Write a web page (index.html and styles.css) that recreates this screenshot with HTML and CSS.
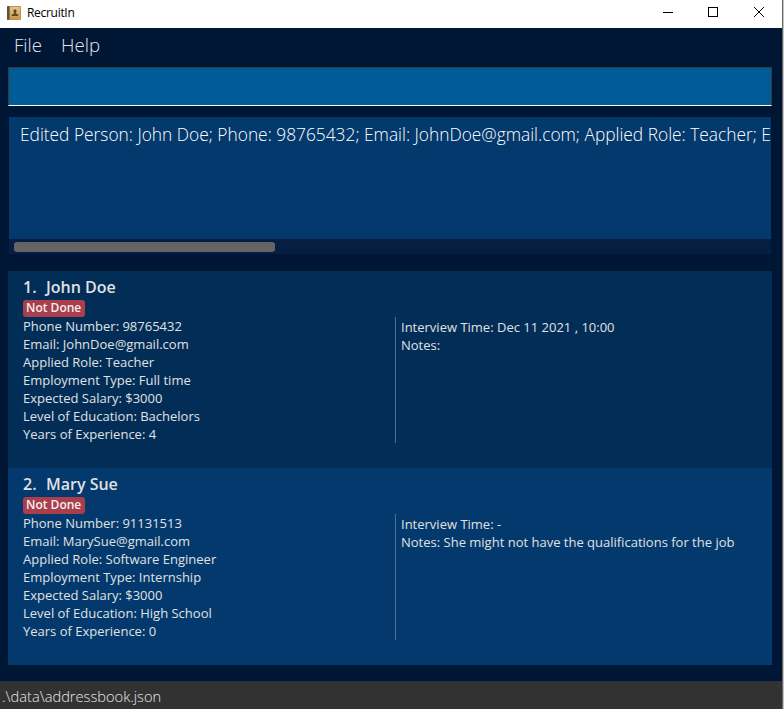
FILE: index.html
```html
<!DOCTYPE html>
<html lang="en">
<head>
<meta charset="utf-8">
<title>RecruitIn</title>
<link rel="stylesheet" href="styles.css">
</head>
<body>
<div class="window">
  <header class="titlebar">
    <svg class="app-icon" width="14" height="14" viewBox="0 0 14 14">
      <defs><linearGradient id="cover" x1="0" y1="0" x2="0" y2="1"><stop offset="0" stop-color="#e3c48c"/><stop offset="1" stop-color="#cc9840"/></linearGradient></defs>
      <rect width="14" height="14" rx="1" fill="#b8925a"/>
      <rect width="2.500" height="14" rx="1" fill="#66503c"/>
      <rect x="3" y="1" width="10" height="12" fill="url(#cover)"/>
      <path d="M8 3.500c1.100 0 1.600.7 1.500 1.700-.1.800-.4 1.200-.7 1.600v.8l2.400.8v1.600H4.800V8.400l2.400-.8v-.8c-.3-.4-.6-.8-.7-1.600C6.400 4.200 6.900 3.500 8 3.500z" fill="#5c4526"/>
    </svg>
    <span class="title">RecruitIn</span>
    <svg class="controls" width="102" height="12" viewBox="0 0 102 12" fill="none" stroke="#000">
      <path d="M0 6.500h10M45.500 1.500h9v9h-9z" shape-rendering="crispEdges"/>
      <path d="M91 1l10 10M101 1L91 11"/>
    </svg>
  </header>
  <nav class="menu"><span class="file">File</span><span class="help">Help</span></nav>
  <div class="command"></div>
  <section class="result">
    <div class="message">Edited Person: John Doe; Phone: 98765432; Email: JohnDoe@gmail.com; Applied Role: Teacher; E</div>
    <div class="track"><div class="thumb"></div></div>
  </section>
  <main class="list">
    <article class="card">
      <h2><span class="index">1.</span>John Doe</h2>
      <span class="badge">Not Done</span>
      <div class="columns">
        <div class="details">
          <p>Phone Number: 98765432</p>
          <p>Email: JohnDoe@gmail.com</p>
          <p>Applied Role: Teacher</p>
          <p>Employment Type: Full time</p>
          <p>Expected Salary: $3000</p>
          <p>Level of Education: Bachelors</p>
          <p>Years of Experience: 4</p>
        </div>
        <div class="interview">
          <p>Interview Time: Dec 11 2021 , 10:00</p>
          <p>Notes:</p>
        </div>
      </div>
    </article>
    <article class="card alt">
      <h2><span class="index">2.</span>Mary Sue</h2>
      <span class="badge">Not Done</span>
      <div class="columns">
        <div class="details">
          <p>Phone Number: 91131513</p>
          <p>Email: MarySue@gmail.com</p>
          <p>Applied Role: Software Engineer</p>
          <p>Employment Type: Internship</p>
          <p>Expected Salary: $3000</p>
          <p>Level of Education: High School</p>
          <p>Years of Experience: 0</p>
        </div>
        <div class="interview">
          <p>Interview Time: -</p>
          <p>Notes: She might not have the qualifications for the job</p>
        </div>
      </div>
    </article>
  </main>
  <footer class="status">.\data\addressbook.json</footer>
</div>
</body>
</html>
```

FILE: styles.css
```css
* { box-sizing: border-box; }
body { margin: 0; background: #c8c4c0; font-family: "Open Sans", sans-serif; }
h2, p { margin: 0; }
.window {
  width: 783px;
  height: 709px;
  display: flex;
  flex-direction: column;
  overflow: hidden;
  background: #001635;
  border-right: 1px solid #646464;
}
.titlebar {
  height: 28px;
  flex: none;
  display: flex;
  align-items: center;
  padding: 0 17px 4px 7px;
  background: #fff;
  color: #000;
}
.app-icon { margin-top: 1px; }
.title { margin-left: 6px; font-size: 12px; letter-spacing: -0.3px; line-height: 16px; margin-top: 2px; }
.controls { margin-left: auto; }
.menu {
  height: 39px;
  flex: none;
  display: flex;
  gap: 19px;
  padding-left: 14px;
  font-size: 18.67px;
  font-weight: 300;
  line-height: 33px;
  color: #e2e5ea;
}
.command {
  height: 39px;
  flex: none;
  margin: 0 10px 0 8px;
  background: #005b96;
  border: 1px solid #383838;
  border-bottom-color: #fff;
}
.result {
  height: 137px;
  flex: none;
  margin: 11px 11px 0 9px;
  background: #03396c;
  display: flex;
  flex-direction: column;
  overflow: hidden;
  border-radius: 0 0 2px 2px;
}
.message {
  height: 122px;
  padding-left: 11px;
  font-size: 17.33px;
  font-weight: 300;
  line-height: 35px;
  white-space: nowrap;
  color: #fff;
}
.track { height: 15px; padding: 3px 5px 2px; background: #051e42; }
.thumb { width: 261px; height: 10px; border-radius: 3px; background: #646464; }
.list { margin: 17px 10px 0 8px; flex: none; }
.card { height: 197px; padding: 5px 15px 0; background: #022d57; color: #e0e1e3; font-size: 13px; }
.card.alt { background: #03396c; }
.card h2 { display: flex; font-size: 16px; font-weight: 600; line-height: 22px; height: 24px; }
.index { width: 23px; }
.badge {
  display: block;
  width: 62px;
  height: 17px;
  padding-left: 3px;
  border-radius: 3px;
  background: #aa3e4c;
  color: #f4f0f1;
  font-size: 12px;
  font-weight: 600;
  line-height: 16px;
}
.columns { display: flex; height: 126px; line-height: 18px; white-space: nowrap; }
.details { width: 372px; }
.interview { padding: 1px 0 0 5px; border-left: 1px solid #546f89; }
.status {
  height: 28px;
  flex: none;
  margin-top: auto;
  padding-left: 2px;
  background: #323232;
  color: #e8e8e8;
  font-size: 14.67px;
  font-weight: 300;
  line-height: 30px;
}
```
